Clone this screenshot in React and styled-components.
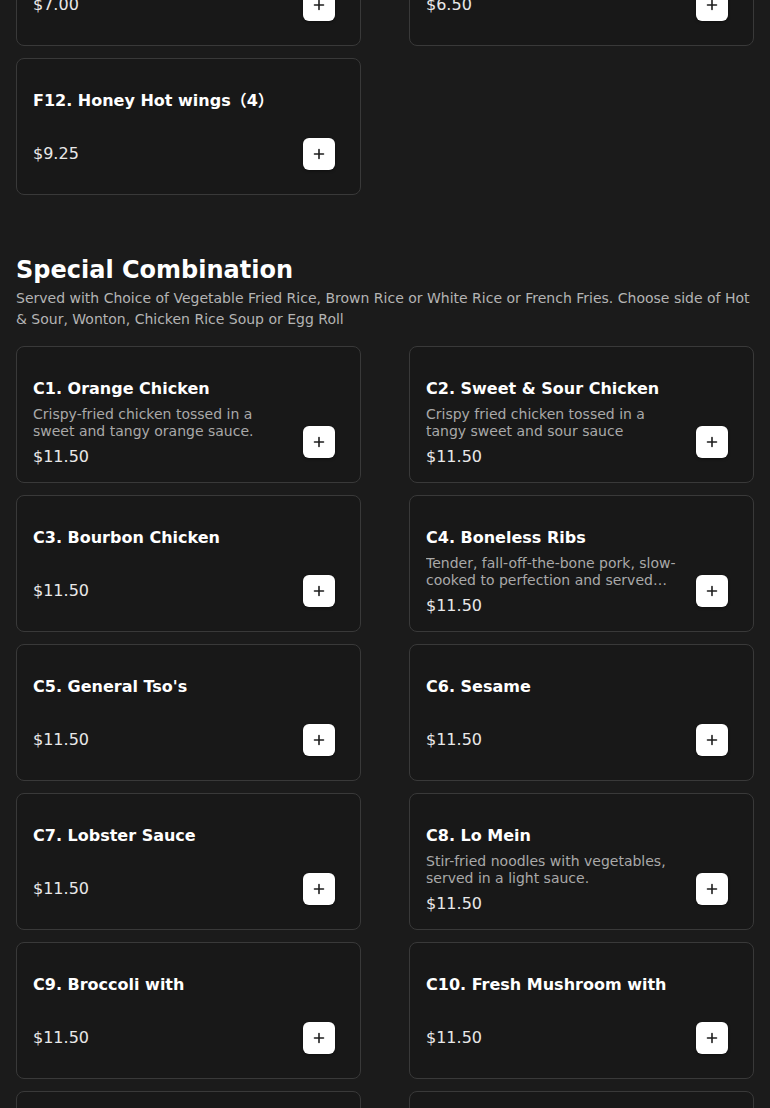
import React from "react";
import styled, { createGlobalStyle } from "styled-components";

const Global = createGlobalStyle`
  html, body { margin: 0; padding: 0; background: #1b1b1b; }
  body { font-family: "DejaVu Sans", "Noto Sans CJK SC", sans-serif; color: #fff; overflow: hidden; }
`;

const Page = styled.main`
  padding: 0 16px;
  width: 770px;
  box-sizing: border-box;
`;

const Section = styled.section`
  margin-top: ${(p) => p.$offset}px;
`;

const Heading = styled.h2`
  margin: 0;
  font-size: 24px;
  line-height: 32px;
  font-weight: 700;
  color: #ffffff;
`;

const SectionNote = styled.p`
  margin: 2px 0 0;
  font-size: 14px;
  line-height: 21px;
  color: #b4b4b4;
`;

const Grid = styled.div`
  display: grid;
  grid-template-columns: 345px 345px;
  column-gap: 48px;
  row-gap: 12px;
  margin-top: ${(p) => (p.$spaced ? 16 : 0)}px;
`;

const Card = styled.article`
  box-sizing: border-box;
  min-height: 137px;
  display: flex;
  align-items: flex-start;
  gap: 16px;
  padding: 30px 25px 12px 16px;
  background: #181818;
  border: 1px solid #393939;
  border-radius: 8px;
`;

const Info = styled.div`
  flex: 1;
  min-width: 0;
  display: flex;
  flex-direction: column;
`;

const Title = styled.h3`
  margin: 0;
  font-size: 16px;
  line-height: 24px;
  font-weight: 700;
  color: #ffffff;
`;

const Desc = styled.p`
  margin: 5px 0;
  min-height: 19px;
  font-size: 14px;
  line-height: 17px;
  color: #a9a9a9;
  display: -webkit-box;
  -webkit-line-clamp: 2;
  -webkit-box-orient: vertical;
  overflow: hidden;
`;

const Price = styled.span`
  font-size: 16px;
  line-height: 24px;
  color: #e8e8e8;
`;

const AddButton = styled.button`
  flex: none;
  width: 32px;
  height: 32px;
  margin-top: 49px;
  padding: 0;
  display: flex;
  align-items: center;
  justify-content: center;
  background: #ffffff;
  border: none;
  border-radius: 6px;
  box-shadow: 0 1px 3px rgba(0, 0, 0, 0.4);
  cursor: pointer;
`;

const PlusIcon = () => (
  <svg width="12" height="12" viewBox="0 0 12 12" aria-hidden="true">
    <path d="M6 1.5v9M1.5 6h9" stroke="#1e1e1e" strokeWidth="1.6" strokeLinecap="round" />
  </svg>
);

const Item = ({ title, desc, price }) => (
  <Card>
    <Info>
      <Title>{title}</Title>
      <Desc>{desc}</Desc>
      <Price>{price}</Price>
    </Info>
    <AddButton aria-label={`Add ${title}`}>
      <PlusIcon />
    </AddButton>
  </Card>
);

const fried = [
  { title: "F10. Chicken Wings (6)", price: "$7.00" },
  { title: "F11. Fried Shrimp (6)", price: "$6.50" },
  { title: "F12. Honey Hot wings（4）", price: "$9.25" },
];

const combos = [
  { title: "C1. Orange Chicken", desc: "Crispy-fried chicken tossed in a sweet and tangy orange sauce.", price: "$11.50" },
  { title: "C2. Sweet & Sour Chicken", desc: "Crispy fried chicken tossed in a tangy sweet and sour sauce", price: "$11.50" },
  { title: "C3. Bourbon Chicken", price: "$11.50" },
  { title: "C4. Boneless Ribs", desc: "Tender, fall-off-the-bone pork, slow-cooked to perfection and served with a smoky glaze.", price: "$11.50" },
  { title: "C5. General Tso's", price: "$11.50" },
  { title: "C6. Sesame", price: "$11.50" },
  { title: "C7. Lobster Sauce", price: "$11.50" },
  { title: "C8. Lo Mein", desc: "Stir-fried noodles with vegetables, served in a light sauce.", price: "$11.50" },
  { title: "C9. Broccoli with", price: "$11.50" },
  { title: "C10. Fresh Mushroom with", price: "$11.50" },
  { title: "C11. Mixed Vegetable with", price: "$11.50" },
  { title: "C12. Kung Pao", price: "$11.50" },
];

export default function App() {
  return (
    <>
      <Global />
      <Page>
        <Section $offset={-91}>
          <Grid>
            {fried.map((it) => (
              <Item key={it.title} {...it} />
            ))}
          </Grid>
        </Section>
        <Section $offset={59}>
          <Heading>Special Combination</Heading>
          <SectionNote>
            Served with Choice of Vegetable Fried Rice, Brown Rice or White Rice or French Fries. Choose side of Hot &amp; Sour, Wonton, Chicken Rice Soup or Egg Roll
          </SectionNote>
          <Grid $spaced>
            {combos.map((it) => (
              <Item key={it.title} {...it} />
            ))}
          </Grid>
        </Section>
      </Page>
    </>
  );
}
